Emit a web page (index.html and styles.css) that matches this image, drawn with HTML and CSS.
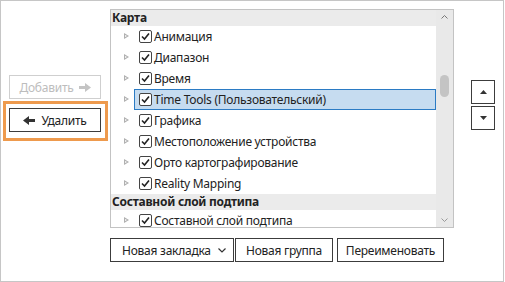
FILE: index.html
```html
<!DOCTYPE html>
<html>
<head>
<meta charset="utf-8">
<link rel="stylesheet" href="styles.css">
</head>
<body>
<div class="frame">
  <div class="main">
    <div class="left">
      <button class="btn add" disabled>Добавить
        <svg class="arr" width="12" height="9" viewBox="0 0 12 9"><path d="M0 3H6V0L12 4.5L6 9V6H0Z" fill="#c4c4c4"/></svg>
      </button>
      <div class="hl">
        <button class="btn remove">
          <svg class="arr" width="12" height="9" viewBox="0 0 12 9"><path d="M12 3H6V0L0 4.5L6 9V6H12Z" fill="#333"/></svg>
          Удалить
        </button>
      </div>
    </div>
    <div class="list">
      <div class="rows">
        <div class="hdr">Карта</div>
        <div class="row"><span class="exp"></span><span class="cb"></span><span class="lbl">Анимация</span></div>
        <div class="row"><span class="exp"></span><span class="cb"></span><span class="lbl">Диапазон</span></div>
        <div class="row"><span class="exp"></span><span class="cb"></span><span class="lbl">Время</span></div>
        <div class="row sel"><span class="exp"></span><span class="selbox"><span class="cb"></span><span class="lbl">Time Tools (Пользовательский)</span></span></div>
        <div class="row"><span class="exp"></span><span class="cb"></span><span class="lbl">Графика</span></div>
        <div class="row"><span class="exp"></span><span class="cb"></span><span class="lbl">Местоположение устройства</span></div>
        <div class="row"><span class="exp"></span><span class="cb"></span><span class="lbl">Орто картографирование</span></div>
        <div class="row"><span class="exp"></span><span class="cb"></span><span class="lbl">Reality Mapping</span></div>
        <div class="hdr">Составной слой подтипа</div>
        <div class="row"><span class="exp"></span><span class="cb"></span><span class="lbl">Составной слой подтипа</span></div>
      </div>
      <div class="sb">
        <svg class="sbarr" width="7" height="4" viewBox="0 0 7 4"><path d="M0.5 3.5L3.5 0.5L6.5 3.5" fill="none" stroke="#777" stroke-width="1"/></svg>
        <div class="thumb"></div>
        <svg class="sbarr down" width="7" height="4" viewBox="0 0 7 4"><path d="M0.5 0.5L3.5 3.5L6.5 0.5" fill="none" stroke="#999" stroke-width="1"/></svg>
      </div>
    </div>
    <div class="right">
      <button class="sq"><svg width="7" height="4" viewBox="0 0 7 4"><path d="M0 4L3.5 0L7 4Z" fill="#333"/></svg></button>
      <button class="sq"><svg width="7" height="4" viewBox="0 0 7 4"><path d="M0 0L3.5 4L7 0Z" fill="#333"/></svg></button>
    </div>
  </div>
  <div class="bottom">
    <div class="dd"><span>Новая закладка</span><svg width="8" height="5" viewBox="0 0 8 5"><path d="M0.5 0.5L4 4L7.5 0.5" fill="none" stroke="#333" stroke-width="1.2"/></svg></div>
    <button class="btn b2">Новая группа</button>
    <button class="btn b3">Переименовать</button>
  </div>
</div>
</body>
</html>
```
FILE: styles.css
```css
* { box-sizing: border-box; }
body { margin: 0; font-family: "Noto Sans", "Open Sans", sans-serif; font-size: 12px; letter-spacing: -0.25px; color: #222; background: #fff; }
.frame { width: 504px; height: 282px; border: 1px solid #c6c6c6; padding-top: 8px; }
.main { display: flex; }
.left { width: 109px; display: flex; flex-direction: column; padding-top: 66px; }
.btn { font-family: inherit; font-size: 12px; letter-spacing: -0.25px; background: #fff; border: 1px solid #3c3c3c; color: #222; height: 24px; padding: 0; display: flex; align-items: center; justify-content: center; gap: 5px; }
.add { margin-left: 8px; width: 92px; border-color: #cfcfcf; color: #bdbdbd; height: 24px; gap: 5px; }
.hl { margin-left: 2px; margin-top: 2px; width: 105px; height: 40px; border: 3px solid #ee9a4d; padding: 4px 0 0 3px; }
.remove { width: 92px; height: 24px; gap: 6px; }
.list { width: 344px; height: 219px; border: 1px solid #c3c3c3; display: flex; overflow: hidden; }
.rows { flex: 1; overflow: hidden; }
.hdr { height: 16px; line-height: 16px; background: #ebebeb; font-weight: bold; padding-left: 1px; color: #222; }
.row { height: 21px; display: flex; align-items: center; padding-left: 13px; }
.exp { width: 5px; height: 7px; margin-right: 10px; position: relative; }
.exp::before { content: ""; position: absolute; left: 0; top: 0; border-left: 5px solid #b0b0b0; border-top: 3.5px solid transparent; border-bottom: 3.5px solid transparent; }
.exp::after { content: ""; position: absolute; left: 1px; top: 2px; border-left: 2px solid #fff; border-top: 1.5px solid transparent; border-bottom: 1.5px solid transparent; }
.cb { width: 13px; height: 13px; border: 1px solid #444; border-radius: 2px; margin-right: 2px; flex: none; background: #fff url("data:image/svg+xml,%3Csvg xmlns='http://www.w3.org/2000/svg' width='11' height='11'%3E%3Cpath d='M2 5.5L4.5 8L9 2.5' fill='none' stroke='%23222' stroke-width='1.6'/%3E%3C/svg%3E") center/11px 11px no-repeat; }
.lbl { white-space: nowrap; }
.sel .exp { margin-right: 5px; }
.selbox { flex: 1; height: 21px; display: flex; align-items: center; background: #c6dcf0; border: 1px solid #2b7bc4; padding-left: 4px; }
.sb { width: 17px; background: #e9e9e9; position: relative; }
.sbarr { position: absolute; left: 5px; top: 5px; }
.sbarr.down { top: auto; bottom: 5px; }
.thumb { position: absolute; left: 4px; top: 65px; width: 9px; height: 22px; border-radius: 5px; background: #c4c4c4; }
.right { display: flex; flex-direction: column; gap: 2px; padding-top: 71px; margin-left: 17px; }
.sq { width: 24px; height: 24px; background: #fff; border: 1px solid #3c3c3c; padding: 0; display: flex; align-items: center; justify-content: center; }
.bottom { display: flex; margin-top: 10px; margin-left: 109px; }
.dd { width: 124px; height: 24px; border: 1px solid #3c3c3c; display: flex; align-items: center; justify-content: space-between; padding: 0 7px 0 11px; }
.b2 { margin-left: 1px; width: 98px; }
.b3 { margin-left: 4px; width: 107px; }
```
